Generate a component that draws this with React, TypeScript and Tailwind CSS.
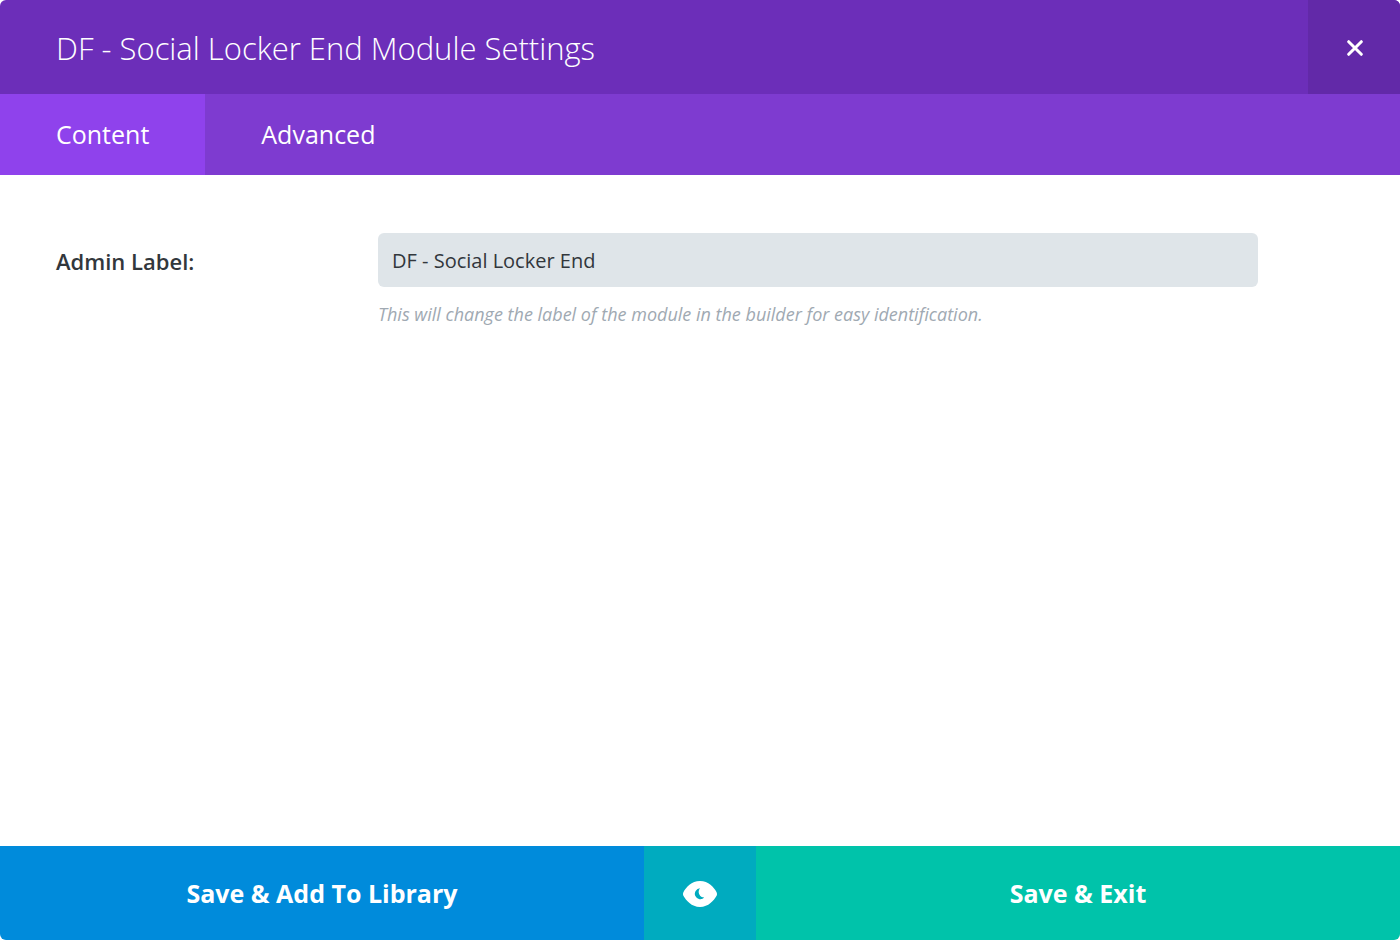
export default function App() {
  return (
    <main className="flex min-h-screen flex-col overflow-hidden rounded-md bg-white font-['Open_Sans',sans-serif]">
      <header className="flex h-[94px] items-stretch justify-between bg-[#6c2eb9] text-white">
        <h1 className="flex items-center px-14 pt-[2px] text-[31px] leading-10 font-light">DF - Social Locker End Module Settings</h1>
        <button type="button" aria-label="Close" className="flex w-[92px] items-center justify-center bg-[#6229a8] pt-[2px] pl-[2px]">
          <svg viewBox="0 0 16 16" className="size-4" fill="none" stroke="currentColor" strokeWidth="3" strokeLinecap="round">
            <path d="M1.7 1.7 14.3 14.3M14.3 1.7 1.7 14.3" />
          </svg>
        </button>
      </header>
      <nav className="flex h-[81px] bg-[#7e3bd0] text-[25px] font-medium text-white">
        <a href="#content" aria-current="page" className="flex items-center bg-[#8f42ec] px-14 pt-px">Content</a>
        <a href="#advanced" className="flex items-center px-14 pt-px">Advanced</a>
      </nav>
      <form id="content" className="flex flex-1 flex-col">
        <div className="flex flex-1 px-14 pt-[58px]">
          <label htmlFor="admin-label" className="w-[322px] shrink-0 pt-3 text-[22px] leading-8 font-semibold text-[#32373c]">Admin Label:</label>
          <div className="mr-[86px] flex-1">
            <input id="admin-label" type="text" defaultValue="DF - Social Locker End" aria-describedby="admin-help" className="h-[54px] w-full rounded-md bg-[#dfe5e9] px-[14px] text-[20px] text-[#32373c] outline-none" />
            <p id="admin-help" className="mt-[13px] text-[18px] leading-7 font-medium text-[#a0a9b2] italic">This will change the label of the module in the builder for easy identification.</p>
          </div>
        </div>
        <footer className="flex h-[94px] text-[25px] font-bold text-white">
          <button type="button" className="flex-1 bg-[#008bdb] pt-[2px]">Save &amp; Add To Library</button>
          <button type="button" aria-label="Preview" className="flex w-[112px] items-center justify-center bg-[#00abbf] pt-px">
            <svg viewBox="0 0 34 26" className="h-[26px] w-[34px]" fill="currentColor">
              <path fillRule="evenodd" d="M17 0C8.5 0 3 6.5 0.4 11.2Q-0.4 13 0.4 14.8C3 19.5 8.5 26 17 26S31 19.5 33.6 14.8Q34.4 13 33.6 11.2C31 6.5 25.5 0 17 0ZM17 7.3A5.5 5.5 0 1 0 21.3 16.6A5.7 5.7 0 0 1 17 7.3Z" />
            </svg>
          </button>
          <button type="submit" className="flex-1 bg-[#00c3aa] pt-[2px]">Save &amp; Exit</button>
        </footer>
      </form>
    </main>
  );
}
